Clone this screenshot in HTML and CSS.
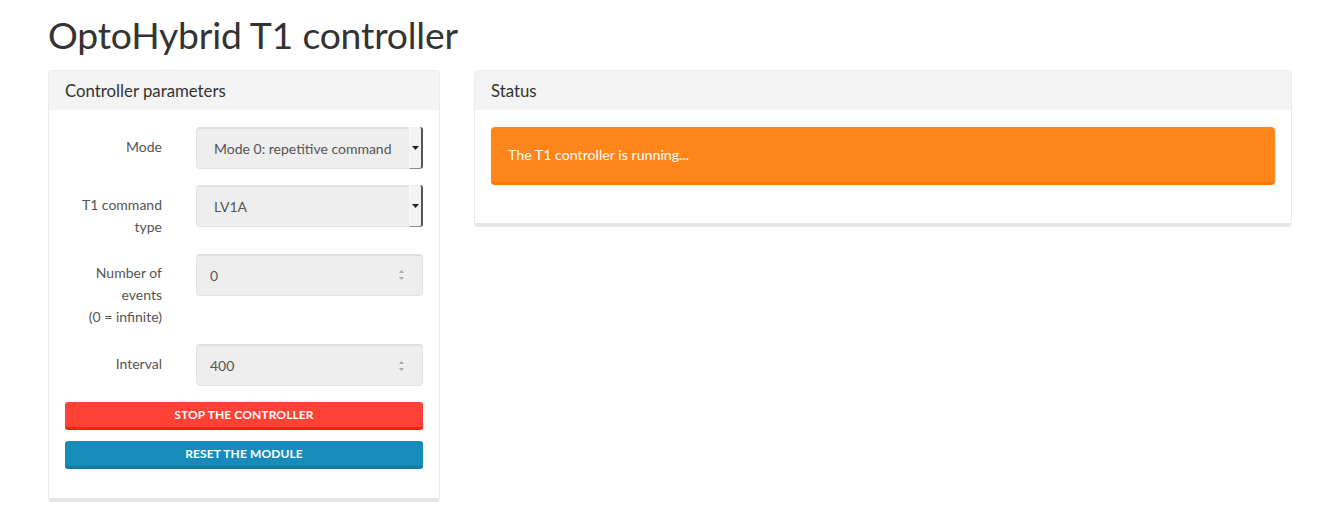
FILE: index.html
```html
<!DOCTYPE html>
<html>
<head>
<meta charset="utf-8">
<link rel="stylesheet" href="styles.css">
</head>
<body>
<div class="page">
  <h1 class="title">OptoHybrid T1 controller</h1>
  <div class="row">
    <div class="panel panel-left">
      <div class="panel-heading">Controller parameters</div>
      <div class="panel-body">
        <div class="form-row">
          <div class="label">Mode</div>
          <div class="field select">
            <span class="value">Mode 0: repetitive command</span>
            <span class="drop"><svg width="7" height="4" viewBox="0 0 7 4"><path d="M0 0H7L3.5 4Z" fill="#222"/></svg></span>
          </div>
        </div>
        <div class="form-row">
          <div class="label">T1 command<br>type</div>
          <div class="field select">
            <span class="value">LV1A</span>
            <span class="drop"><svg width="7" height="4" viewBox="0 0 7 4"><path d="M0 0H7L3.5 4Z" fill="#222"/></svg></span>
          </div>
        </div>
        <div class="form-row">
          <div class="label">Number of<br>events<br>(0 = infinite)</div>
          <div class="field number">
            <span class="value">0</span>
            <span class="spin"><svg width="7" height="14" viewBox="0 0 7 14"><path d="M1 5H6L3.5 2Z" fill="#aaa"/><path d="M1 9H6L3.5 12Z" fill="#aaa"/></svg></span>
          </div>
        </div>
        <div class="form-row">
          <div class="label">Interval</div>
          <div class="field number">
            <span class="value">400</span>
            <span class="spin"><svg width="7" height="14" viewBox="0 0 7 14"><path d="M1 5H6L3.5 2Z" fill="#aaa"/><path d="M1 9H6L3.5 12Z" fill="#aaa"/></svg></span>
          </div>
        </div>
        <div class="btn btn-danger">STOP THE CONTROLLER</div>
        <div class="btn btn-primary">RESET THE MODULE</div>
      </div>
    </div>
    <div class="panel panel-right">
      <div class="panel-heading">Status</div>
      <div class="panel-body">
        <div class="alert">The T1 controller is running...</div>
      </div>
    </div>
  </div>
</div>
</body>
</html>
```
FILE: styles.css
```css
html, body {
  margin: 0;
  padding: 0;
  background: #fff;
}
body {
  font-family: "Lato", "Liberation Sans", sans-serif;
  font-size: 14px;
  color: #333;
}
.page {
  padding: 0 29px 0 48px;
}
.title {
  margin: 13px 0 13px;
  font-size: 37.3px;
  font-weight: 400;
  line-height: 44px;
  color: #333;
  letter-spacing: -0.2px;
}
.row {
  display: flex;
  align-items: flex-start;
  gap: 34px;
}
.panel {
  background: #fff;
  border: 1px solid #ececec;
  border-bottom: 4px solid #e6e6e6;
  border-radius: 4px;
  box-sizing: border-box;
}
.panel-left {
  width: 392px;
  flex: none;
}
.panel-right {
  width: 818px;
  flex: none;
}
.panel-heading {
  height: 39px;
  background: #f4f4f4;
  padding: 0 16px;
  font-size: 16.8px;
  line-height: 39px;
  color: #333;
  border-radius: 3px 3px 0 0;
}
.panel-body {
  padding: 17px 16px 29px;
}
.panel-right .panel-body {
  padding-bottom: 38px;
}
.form-row {
  display: flex;
  align-items: flex-start;
  margin-bottom: 16px;
}
.label {
  width: 97px;
  flex: none;
  text-align: right;
  padding-top: 8.5px;
  line-height: 22px;
  color: #555;
  font-size: 14px;
}
.field {
  margin-left: 34px;
  flex: 1;
  height: 42px;
  box-sizing: border-box;
  background: #eeeeee;
  border: 1px solid #e4e4e4;
  border-top: 2px solid #e0e0e0;
  border-radius: 4px;
  display: flex;
  align-items: center;
  color: #555;
}
.field .value {
  flex: 1;
}
.select {
  padding-left: 17px;
  border-right: none;
}
.select .drop {
  width: 11px;
  align-self: stretch;
  margin: -2px 0 -1px;
  border-left: 1px solid #fafafa;
  border-right: 2px solid #555;
  border-bottom: 1px solid #888;
  border-radius: 0 3px 3px 0;
  background: #f3f3f3;
  display: flex;
  align-items: center;
  justify-content: center;
}
.number {
  padding-left: 13px;
  padding-right: 17px;
}
.spin {
  display: flex;
  align-items: center;
}
.btn {
  height: 28px;
  box-sizing: border-box;
  border-radius: 3px;
  color: #fff;
  font-weight: 700;
  font-size: 12px;
  text-align: center;
  line-height: 26px;
  letter-spacing: 0.1px;
}
.btn-danger {
  background: #ff4136;
  border-bottom: 3px solid #ff1f12;
  margin-bottom: 11px;
}
.btn-primary {
  background: #178cba;
  border-bottom: 3px solid #137ba3;
}
.alert {
  height: 58px;
  box-sizing: border-box;
  background: #ff851b;
  border-bottom: 3px solid #ff7700;
  border-radius: 4px;
  color: #fff;
  padding: 0 17px;
  line-height: 56px;
  font-size: 14.2px;
}
```
